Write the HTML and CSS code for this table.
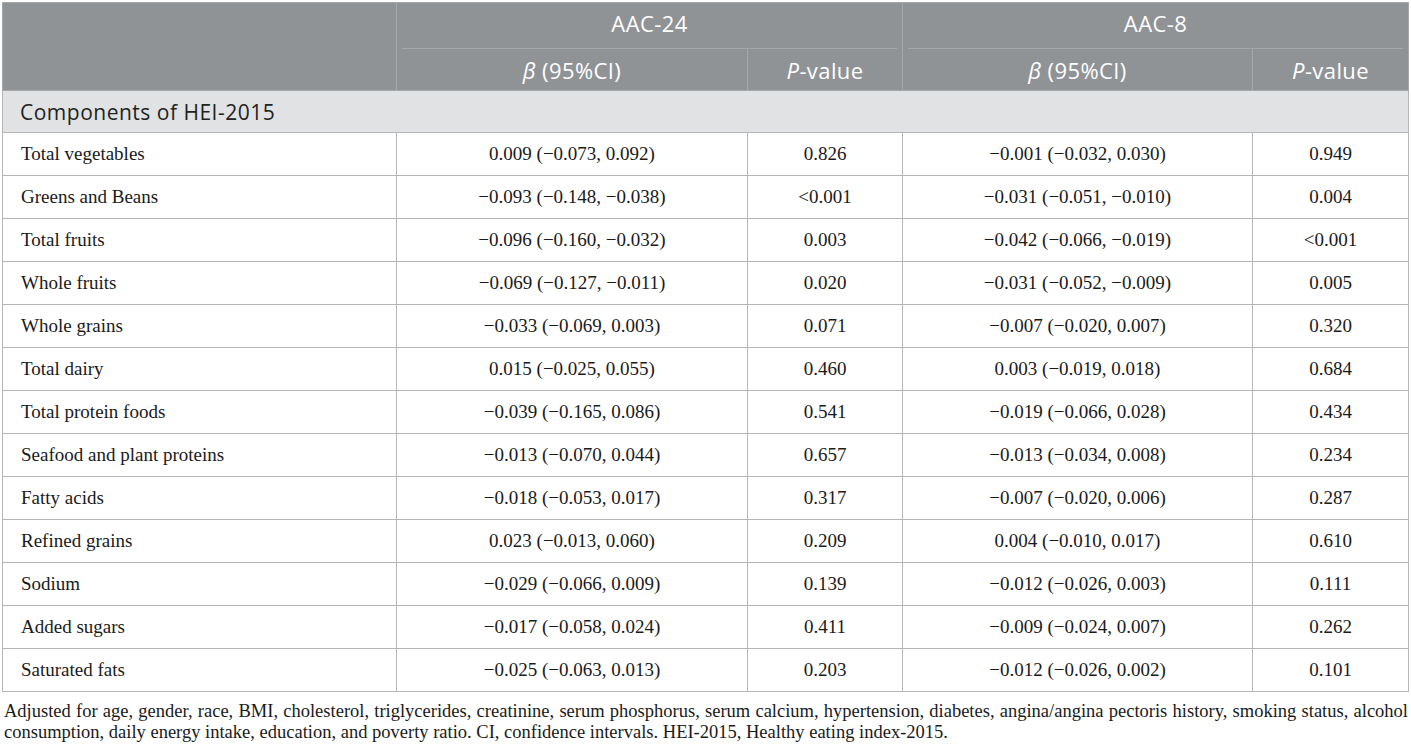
FILE: index.html
```html
<!DOCTYPE html>
<html>
<head>
<meta charset="utf-8">
<title>Components of HEI-2015 and AAC</title>
<link rel="stylesheet" href="styles.css">
</head>
<body>
<div class="page">
<table class="tbl">
	<colgroup>
		<col class="c-name">
		<col class="c-beta">
		<col class="c-p">
		<col class="c-beta2">
		<col class="c-p2">
	</colgroup>
	<thead>
		<tr class="h1">
			<th rowspan="2" class="blank"></th>
			<th colspan="2"><div class="grp">AAC-24</div></th>
			<th colspan="2"><div class="grp">AAC-8</div></th>
		</tr>
		<tr class="h2">
			<th><i>β</i> (95%CI)</th>
			<th><i>P</i>-value</th>
			<th><i>β</i> (95%CI)</th>
			<th><i>P</i>-value</th>
		</tr>
	</thead>
	<tbody>
		<tr class="sect"><td colspan="5">Components of HEI-2015</td></tr>
		<tr><td>Total vegetables</td><td>0.009 (−0.073, 0.092)</td><td>0.826</td><td>−0.001 (−0.032, 0.030)</td><td>0.949</td></tr>
		<tr><td>Greens and Beans</td><td>−0.093 (−0.148, −0.038)</td><td>&lt;0.001</td><td>−0.031 (−0.051, −0.010)</td><td>0.004</td></tr>
		<tr><td>Total fruits</td><td>−0.096 (−0.160, −0.032)</td><td>0.003</td><td>−0.042 (−0.066, −0.019)</td><td>&lt;0.001</td></tr>
		<tr><td>Whole fruits</td><td>−0.069 (−0.127, −0.011)</td><td>0.020</td><td>−0.031 (−0.052, −0.009)</td><td>0.005</td></tr>
		<tr><td>Whole grains</td><td>−0.033 (−0.069, 0.003)</td><td>0.071</td><td>−0.007 (−0.020, 0.007)</td><td>0.320</td></tr>
		<tr><td>Total dairy</td><td>0.015 (−0.025, 0.055)</td><td>0.460</td><td>0.003 (−0.019, 0.018)</td><td>0.684</td></tr>
		<tr><td>Total protein foods</td><td>−0.039 (−0.165, 0.086)</td><td>0.541</td><td>−0.019 (−0.066, 0.028)</td><td>0.434</td></tr>
		<tr><td>Seafood and plant proteins</td><td>−0.013 (−0.070, 0.044)</td><td>0.657</td><td>−0.013 (−0.034, 0.008)</td><td>0.234</td></tr>
		<tr><td>Fatty acids</td><td>−0.018 (−0.053, 0.017)</td><td>0.317</td><td>−0.007 (−0.020, 0.006)</td><td>0.287</td></tr>
		<tr><td>Refined grains</td><td>0.023 (−0.013, 0.060)</td><td>0.209</td><td>0.004 (−0.010, 0.017)</td><td>0.610</td></tr>
		<tr><td>Sodium</td><td>−0.029 (−0.066, 0.009)</td><td>0.139</td><td>−0.012 (−0.026, 0.003)</td><td>0.111</td></tr>
		<tr><td>Added sugars</td><td>−0.017 (−0.058, 0.024)</td><td>0.411</td><td>−0.009 (−0.024, 0.007)</td><td>0.262</td></tr>
		<tr><td>Saturated fats</td><td>−0.025 (−0.063, 0.013)</td><td>0.203</td><td>−0.012 (−0.026, 0.002)</td><td>0.101</td></tr>
	</tbody>
</table>
<p class="note">Adjusted for age, gender, race, BMI, cholesterol, triglycerides, creatinine, serum phosphorus, serum calcium, hypertension, diabetes, angina/angina pectoris history, smoking status, alcohol consumption, daily energy intake, education, and poverty ratio. CI, confidence intervals. HEI-2015, Healthy eating index-2015.</p>
</div>
</body>
</html>
```

FILE: styles.css
```css
html, body{margin:0; padding:0; background:#fff;}
.page{width:1408px; padding:2px 0 0 2px;}

.tbl{width:1406px; border-collapse:collapse; table-layout:fixed; border:1px solid #b3c3b8; font-family:"Liberation Serif", "Times New Roman", serif; font-size:19px; color:#1a1a1a;}
.c-name{width:394px;}
.c-beta{width:351px;}
.c-p{width:155px;}
.c-beta2{width:350px;}
.c-p2{width:156px;}

.tbl thead th{background:#909396; color:#fff; font-family:"Open Sans", "Liberation Sans", sans-serif; font-weight:normal; font-size:22px; letter-spacing:0.4px; border:1px solid #a6a9ab; padding:0; text-align:center;}
.tbl thead th i{font-style:italic;}
.tbl .h1 th{height:46px; border-bottom:none; vertical-align:bottom;}
.tbl .h1 th.blank{border-bottom:1px solid #a6a9ab;}
.tbl .grp{margin:0 5px; padding-bottom:11px; border-bottom:1px solid #a6a9ab; line-height:28px;}
.tbl .h2 th{height:41px; border-top:none;}

.tbl td{border:1px solid #b5b5b5; height:42px; padding:0; text-align:center;}
.tbl td:first-child{text-align:left; padding-left:18px;}
.tbl .sect td{background:#e1e2e3; height:41px; font-family:"Open Sans", "Liberation Sans", sans-serif; font-size:21px; letter-spacing:0.5px; color:#222; padding-left:17px;}

.note{margin:9px 0 0 2px; width:1404px; font-family:"Liberation Serif", "Times New Roman", serif; font-size:18.5px; line-height:21px; text-align:justify; color:#1a1a1a;}
```
